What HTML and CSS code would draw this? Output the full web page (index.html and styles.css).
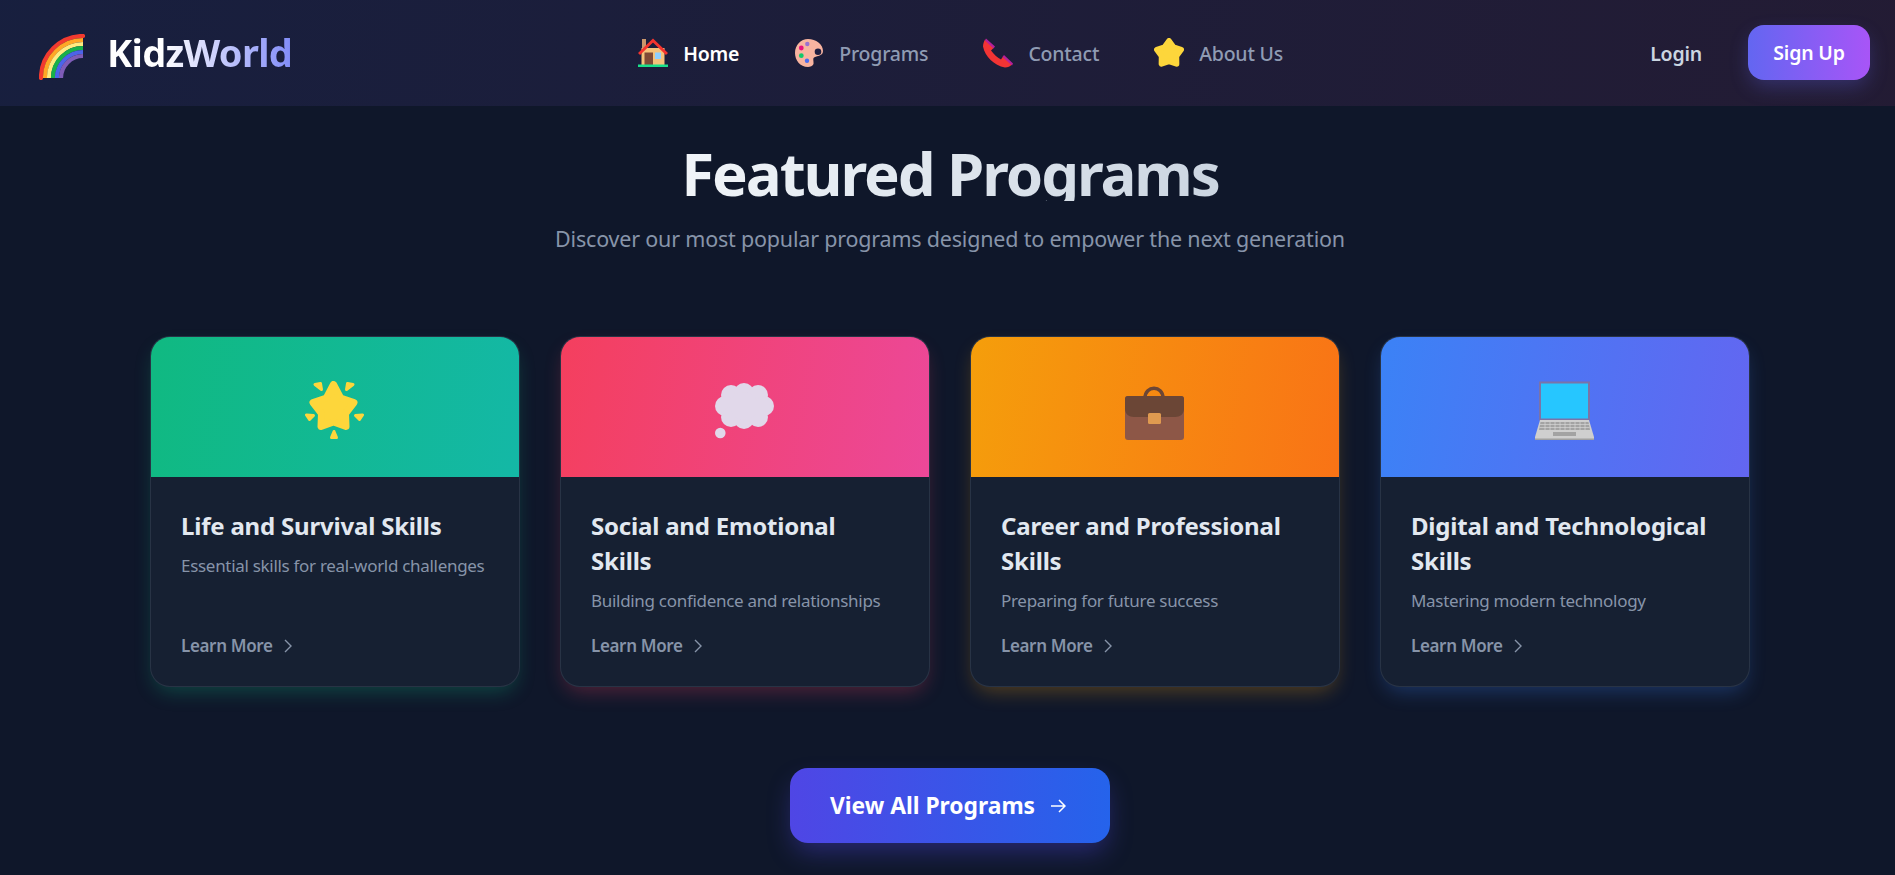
FILE: index.html
```html
<!DOCTYPE html>
<html lang="en">
<head>
<meta charset="utf-8">
<title>KidzWorld</title>
<link rel="stylesheet" href="styles.css">
</head>
<body>
<div class="page">
<header class="topbar">
  <a class="logo" href="#">
    <svg class="logo-icon" viewBox="0 0 46 46" fill="none" stroke-width="4.2">
      <path d="M2 44A42 42 0 0 1 44 2" stroke="#f23a2f" stroke-linecap="round"/>
      <path d="M6 44A38 38 0 0 1 44 6" stroke="#ffa726"/>
      <path d="M10 44A34 34 0 0 1 44 10" stroke="#ffeb80"/>
      <path d="M14 44A30 30 0 0 1 44 14" stroke="#18b04a"/>
      <path d="M18 44A26 26 0 0 1 44 18" stroke="#4c64e8"/>
      <path d="M22 44A22 22 0 0 1 44 22" stroke="#7e5cb8"/>
    </svg>
    <span class="logo-text">KidzWorld</span>
  </a>
  <nav class="nav">
    <a class="nav-link active" href="#">
      <svg class="nav-icon" viewBox="0 0 30 30">
        <rect x="4" y="1" width="4" height="10" fill="#c9966b"/>
        <rect x="3.5" y="10" width="23" height="17" fill="#f5c27a"/>
        <path d="M1 16L15 2.5 29 16" fill="none" stroke="#f4342e" stroke-width="3"/>
        <rect x="6.5" y="14.5" width="8.5" height="12.5" fill="#7f4a36"/>
        <rect x="17" y="14.5" width="6" height="6.5" fill="#8fd0ff"/>
        <rect x="0" y="26.5" width="30" height="2.5" fill="#19e08a"/>
      </svg>
      <span>Home</span>
    </a>
    <a class="nav-link" href="#">
      <svg class="nav-icon" viewBox="-1 -1 30 30">
        <path d="M13 0C21 0 28 5 28 12C28 17 22 17 20 18C17 19 19 22 18.5 25C18 27 15 28 13 28C5 28 0 21 0 14C0 6 6 0 13 0Z" fill="#f8b4a0"/>
        <circle cx="12.3" cy="5" r="2.2" fill="#9a6fd0"/>
        <circle cx="6.3" cy="9" r="2.4" fill="#e8127c"/>
        <circle cx="6.3" cy="16.7" r="2.4" fill="#12c86a"/>
        <circle cx="12" cy="21.7" r="2.2" fill="#4a6cf0"/>
        <circle cx="23" cy="12.7" r="3.3" fill="#1f1e40"/>
      </svg>
      <span>Programs</span>
    </a>
    <a class="nav-link" href="#">
      <svg class="nav-icon" viewBox="0 0 30 29">
        <path d="M2 1L11 9 8 12C11 16 14 19 18 21L20 18 29 26C27 28 25 29 22 29C11 27 2 18 0 8C0 5 1 3 2 1Z" fill="#f23434"/>
        <path d="M3 0L12 8 10.5 10 2 2Z" fill="#b5209a"/>
        <path d="M21 16.5L30 25 29 27 19.5 18.5Z" fill="#b5209a"/>
      </svg>
      <span>Contact</span>
    </a>
    <a class="nav-link" href="#">
      <svg class="nav-icon" viewBox="1.500 1.500 27 27">
        <path d="M15 4L19.1 9.8 26 12 21.7 17.7 21.8 24.8 15 22.500 8.2 24.8 8.3 17.7 4 12 10.9 9.8Z" fill="#fdd63b" stroke="#fdd63b" stroke-width="5" stroke-linejoin="round"/>
      </svg>
      <span>About Us</span>
    </a>
  </nav>
  <div class="actions">
    <a class="login" href="#">Login</a>
    <a class="signup" href="#">Sign Up</a>
  </div>
</header>

<main class="featured">
  <h1 class="title">Featured Programs</h1>
  <p class="subtitle">Discover our most popular programs designed to empower the next generation</p>

  <div class="cards">
    <article class="card card-green">
      <div class="card-top">
        <svg class="card-icon" viewBox="0 0 59 59">
          <path d="M28.500 3.500L35.600 17 49 21.500 40.500 32.500 41 45.500 28.500 41 16 45.500 16.500 32.500 8 21.500 21.400 17Z" fill="#fdd63b" stroke="#fdd63b" stroke-width="7" stroke-linejoin="round"/>
          <g fill="#fdd63b" stroke="#fdd63b" stroke-width="3" stroke-linejoin="round">
            <path d="M10 3.500L15.500 2.500 16.500 8.500Z"/>
            <path d="M48 3.500L42.500 2.500 41.500 8.500Z"/>
            <path d="M1.500 34L8.500 34.500 4.500 38.500Z"/>
            <path d="M57.500 34L50.500 34.500 54.500 38.500Z"/>
            <path d="M29 50.500L31.500 56.500 26.500 56.500Z"/>
          </g>
        </svg>
      </div>
      <div class="card-body">
        <h2 class="card-title">Life and Survival Skills</h2>
        <p class="card-desc">Essential skills for real-world challenges</p>
        <a class="learn" href="#"><span>Learn More</span>
          <svg class="chev" viewBox="0 0 8 14"><path d="M1 1L7 7 1 13"/></svg></a>
      </div>
    </article>

    <article class="card card-pink">
      <div class="card-top">
        <svg class="card-icon" viewBox="0 0 59 59" fill="#e1d8ea">
          <circle cx="16" cy="14" r="10"/><circle cx="29" cy="12" r="10"/><circle cx="43" cy="14" r="10"/>
          <circle cx="10" cy="25" r="10"/><circle cx="49" cy="25" r="10"/>
          <circle cx="16" cy="36" r="10"/><circle cx="29" cy="38" r="10"/><circle cx="43" cy="36" r="10"/>
          <circle cx="29" cy="25" r="14"/>
          <circle cx="5.300" cy="52" r="5.300"/>
        </svg>
      </div>
      <div class="card-body">
        <h2 class="card-title">Social and Emotional Skills</h2>
        <p class="card-desc">Building confidence and relationships</p>
        <a class="learn" href="#"><span>Learn More</span>
          <svg class="chev" viewBox="0 0 8 14"><path d="M1 1L7 7 1 13"/></svg></a>
      </div>
    </article>

    <article class="card card-orange">
      <div class="card-top">
        <svg class="card-icon" viewBox="0 0 59 59">
          <path d="M20 17C20 4 38 4 38 17" fill="none" stroke="#6b4636" stroke-width="3.500"/>
          <rect x="0" y="15" width="59" height="44" rx="3" fill="#8d5747"/>
          <path d="M3 15H56A3 3 0 0 1 59 18V28C59 33 55 36 50 36H9C4 36 0 33 0 28V18A3 3 0 0 1 3 15Z" fill="#6b4636"/>
          <rect x="23" y="32" width="13" height="11" rx="1.500" fill="#df9a50"/>
        </svg>
      </div>
      <div class="card-body">
        <h2 class="card-title">Career and Professional Skills</h2>
        <p class="card-desc">Preparing for future success</p>
        <a class="learn" href="#"><span>Learn More</span>
          <svg class="chev" viewBox="0 0 8 14"><path d="M1 1L7 7 1 13"/></svg></a>
      </div>
    </article>

    <article class="card card-blue">
      <div class="card-top">
        <svg class="card-icon" viewBox="0 0 59 59">
          <rect x="5" y="1.500" width="49" height="37" fill="#26c6ff" stroke="#7b73a8" stroke-width="2"/>
          <path d="M5 39H54L59 56V59H0V56Z" fill="#cfcfcf"/>
          <path d="M5.500 41H53.500L55 49H4Z" fill="#a3a3a3"/>
          <path d="M5 43.500H54M4.500 46.500H54.500M10 41V49M15 41V49M20 41V49M25 41V49M30 41V49M35 41V49M40 41V49M45 41V49M50 41V49" stroke="#d6d6d6" stroke-width=".7"/>
          <rect x="18" y="51" width="23" height="4" fill="#a3a3a3"/>
          <rect x="0" y="57.500" width="59" height="1.500" fill="#a0a0a0"/>
        </svg>
      </div>
      <div class="card-body">
        <h2 class="card-title">Digital and Technological Skills</h2>
        <p class="card-desc">Mastering modern technology</p>
        <a class="learn" href="#"><span>Learn More</span>
          <svg class="chev" viewBox="0 0 8 14"><path d="M1 1L7 7 1 13"/></svg></a>
      </div>
    </article>
  </div>

  <a class="view-all" href="#"><span>View All Programs</span>
    <svg class="arrow" viewBox="0 0 16 14"><path d="M1 7H15M9 1L15 7 9 13"/></svg></a>
</main>
</div>
</body>
</html>
```
FILE: styles.css
```css
* { box-sizing: border-box; }
html, body { margin: 0; height: 100%; overflow: hidden; }
body {
  background: #0f172a;
  font-family: "Noto Sans", "Open Sans", sans-serif;
  color: #e2e8f0;
}
a { text-decoration: none; color: inherit; }
.page { width: 1900px; height: 875px; }

.topbar {
  height: 106px;
  padding: 0 30px 0 39px;
  display: flex;
  align-items: center;
  justify-content: space-between;
  background: linear-gradient(100deg, rgba(99,102,241,.1), rgba(236,72,153,.09));
}
.logo { display: flex; align-items: center; gap: 22px; width: 253px; }
.logo-icon { width: 46px; height: 46px; flex: none; margin-top: 7px; }
.logo-text {
  font-size: 38px;
  font-weight: 700;
  letter-spacing: -.7px;
  line-height: 1.4;
  background: linear-gradient(90deg, #fff 30%, #818cf8 100%);
  -webkit-background-clip: text;
  background-clip: text;
  color: transparent;
}
.nav { display: flex; align-items: center; gap: 55px; margin-left: -21px; }
.nav-link {
  display: flex; align-items: center; gap: 15px;
  font-size: 19.500px; font-weight: 500; color: #8f9bb3;
  letter-spacing: -.2px;
}
.nav-link.active { color: #fff; font-weight: 600; }
.nav-icon { width: 30px; height: 30px; flex: none; }
.actions { display: flex; align-items: center; gap: 46px; }
.login { font-size: 19.500px; font-weight: 600; color: #cbd5e1; letter-spacing: -.2px; }
.signup {
  height: 55px; width: 122px;
  margin-bottom: 1px;
  display: flex; align-items: center; justify-content: center;
  border-radius: 16px;
  font-size: 19.500px; font-weight: 600; color: #fff; letter-spacing: -.2px;
  background: linear-gradient(90deg, #6366f1, #a855f7);
  box-shadow: 0 8px 20px -2px rgba(99,102,241,.3);
}

.featured { display: flex; flex-direction: column; align-items: center; padding-top: 39px; }
.title {
  margin: 0;
  display: block;
  font-size: 60px;
  font-weight: 700;
  line-height: 56px;
  letter-spacing: -2.100px;
  background: linear-gradient(100deg, #f1f5f9, #cbd5e1);
  -webkit-background-clip: text;
  background-clip: text;
  color: transparent;
}
.subtitle { margin: 23px 0 0; font-size: 21.500px; line-height: 30px; color: #8794a9; letter-spacing: -.2px; }

.cards {
  margin-top: 82px;
  width: 1600px;
  display: grid;
  grid-template-columns: repeat(4, 370px);
  column-gap: 40px;
}
.card {
  display: flex; flex-direction: column;
  border-radius: 20px;
  border: 1px solid rgba(148,163,184,.15);
  background: #162032;
  overflow: hidden;
  height: 351px;
}
.card-green { box-shadow: 0 9px 20px -5px rgba(16,185,129,.3); }
.card-pink { box-shadow: 0 9px 20px -5px rgba(244,63,94,.3); }
.card-orange { box-shadow: 0 9px 20px -5px rgba(245,158,11,.3); }
.card-blue { box-shadow: 0 9px 20px -5px rgba(59,130,246,.3); }
.card-top {
  height: 140px; flex: none;
  display: flex; align-items: center; justify-content: center;
  padding: 7px 1px 0 0;
}
.card-green .card-top { background: linear-gradient(100deg, #10b981, #14b8a6); }
.card-pink .card-top { background: linear-gradient(100deg, #f43f5e, #ec4899); }
.card-orange .card-top { background: linear-gradient(100deg, #f59e0b, #f97316); }
.card-blue .card-top { background: linear-gradient(100deg, #3b82f6, #6366f1); }
.card-icon { width: 59px; height: 59px; }
.card-body { flex: 1; padding: 31px 30px 28px; display: flex; flex-direction: column; }
.card-title { margin: 0; font-size: 24px; line-height: 35px; font-weight: 700; color: #e2e8f0; letter-spacing: -.2px; }
.card-desc { margin: 10px 0 0; font-size: 17px; line-height: 25px; color: #8794a9; letter-spacing: -.3px; }
.learn {
  margin-top: auto;
  display: flex; align-items: center; gap: 11px;
  font-size: 17px; line-height: 24px; font-weight: 600; color: #8794a9; letter-spacing: -.35px;
}
.chev { width: 8px; height: 14px; fill: none; stroke: currentColor; stroke-width: 1.400; }

.view-all {
  margin-top: 81px;
  width: 320px; height: 75px;
  padding-right: 4px;
  display: flex; align-items: center; justify-content: center; gap: 15px;
  border-radius: 18px;
  font-size: 22.800px; font-weight: 700; color: #fff;
  background: linear-gradient(90deg, #4f46e5, #2563eb);
  box-shadow: 0 12px 26px -4px rgba(79,70,229,.4);
}
.arrow { width: 16px; height: 14px; fill: none; stroke: #fff; stroke-width: 1.500; }
```
